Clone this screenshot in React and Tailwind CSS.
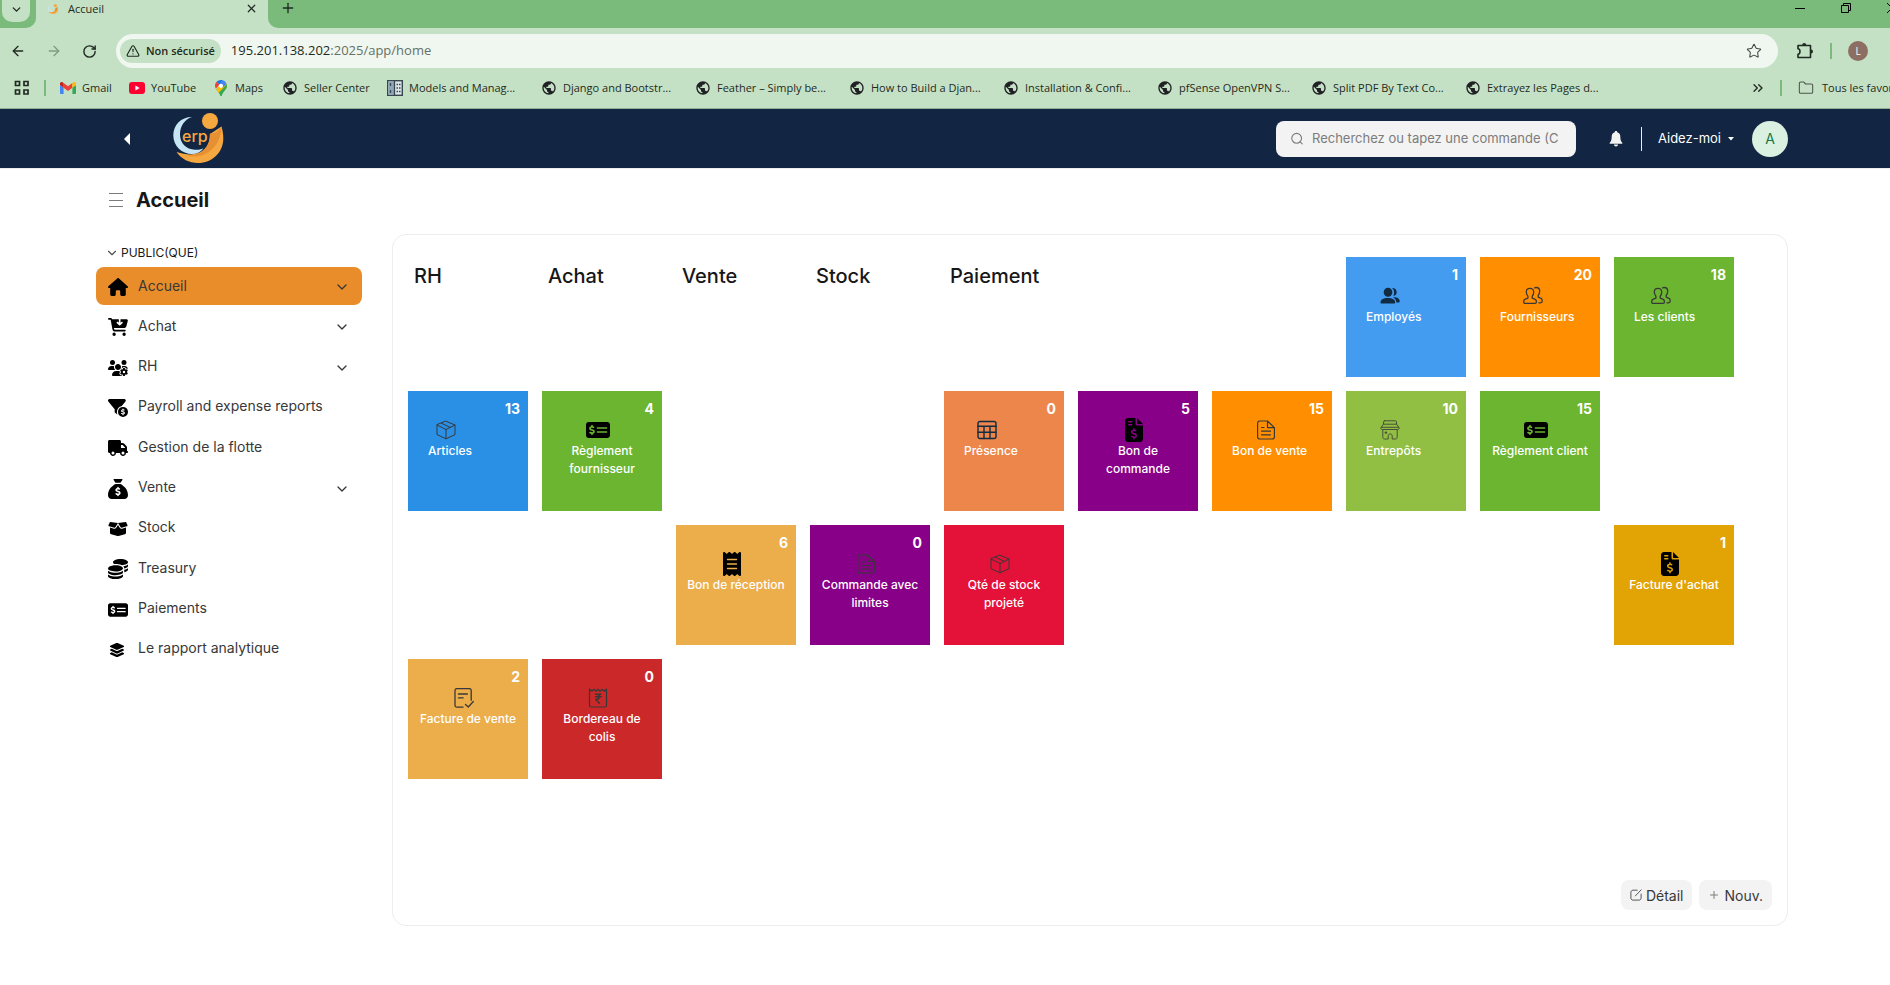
import {
  FaHouse, FaCartArrowDown, FaUsersGear, FaFilterCircleDollar, FaTruck, FaSackDollar,
  FaBoxOpen, FaCoins, FaMoneyCheckDollar, FaLayerGroup, FaFileInvoiceDollar, FaReceipt,
} from "react-icons/fa6";
import { MdPublic } from "react-icons/md";
import { ChevronDown, ChevronsRight, ArrowLeft, ArrowRight, RotateCw, Star, Folder, X, Plus, TriangleAlert } from "lucide-react";

function Line({ children, className = "h-5 w-5 text-[#383838]", sw = 1 }) {
  return (
    <svg viewBox="0 0 20 20" className={className} fill="none" stroke="currentColor" strokeWidth={sw} strokeLinecap="round" strokeLinejoin="round" aria-hidden="true">
      {children}
    </svg>
  );
}

const BoxIcon = () => (
  <Line>
    <path d="M10 1.2 19 5v9.600L10 18.800 1 14.600V5zM1 5l9 4.500L19 5M10 9.500v9.300M5.400 3.200l9 4.300" />
  </Line>
);
const TableIcon = () => (
  <Line className="h-5 w-5 text-[#112b42]" sw={1.4}>
    <rect x="1" y="1.5" width="18" height="17" rx="2" />
    <path d="M1 6.2h18M1 12.2h18M7 6.2v12.3M13 6.2v12.3" />
  </Line>
);
const FileIcon = () => (
  <Line sw={1.2}>
    <path d="M11.500 1H3.800C2.500 1 1.600 1.900 1.600 3.200v13.600c0 1.300.9 2.200 2.200 2.200h12.400c1.300 0 2.200-.9 2.200-2.200V7.600zM11.500 1v6.600h6.900M5.500 7.500h2.500M5.500 11.200h9M5.500 14.800h9" />
  </Line>
);
const LimitFileIcon = () => (
  <Line sw={1.200}>
    <path d="M11.500 1H3.500C2.500 1 1.800 1.900 1.800 3v14c0 1.100.8 2 1.800 2h12.800c1 0 1.800-.9 1.800-2V7.500zM11.500 1v4.500c0 1.200.8 2 2 2h4.700M5.500 8H9M5.500 11.500h9M5.500 15h9" />
  </Line>
);
const StoreIcon = () => (
  <Line className="h-5 w-5 text-[#4a4f3a]">
    <path d="M4.500.8h11c.6 0 1 .4 1 1v2.400H3.500V1.800c0-.6.4-1 1-1zM3.500 4.200.8 7.800c-.2 1 .5 1.700 1.700 1.700h15c1.200 0 1.900-.7 1.700-1.700l-2.700-3.600M1.500 7.300h17M2.800 9.500v7.700c0 1 .7 1.800 1.700 1.800h3.700v-3.200c0-1.100.8-1.900 2-1.900s2 .8 2 1.900V19h3.300c1 0 1.700-.8 1.700-1.800V9.500" />
    <rect x="5.500" y="12" width="1.200" height="1.200" fill="currentColor" />
  </Line>
);
const UsersIcon = () => (
  <Line sw={1.300}>
    <path d="M7 2.300c2.400 0 3.700 1.600 3.700 3.800 0 1.700-.6 3.200-1.500 4.200v1.900l2.600 1c1.100.4 1.600 1.200 1.600 2.300v.5c0 .8-.5 1.300-1.300 1.300H2c-.8 0-1.300-.5-1.300-1.300v-.5c0-1.100.5-1.900 1.600-2.300l2.600-1v-1.900C4 9.300 3.300 7.800 3.300 6.100c0-2.200 1.300-3.800 3.700-3.800z" />
    <path d="M11.500 1.900c.4-.3 1-.4 1.600-.4 2.300 0 3.600 1.600 3.600 3.700 0 1.600-.6 3-1.500 4v1.900l2.400 1c1.100.4 1.600 1.300 1.600 2.300v.7c0 1-.7 1.700-1.700 1.700h-1.600" />
  </Line>
);
const StaffIcon = () => (
  <svg viewBox="0 0 20 20" className="h-5 w-5 fill-[#112b42]" aria-hidden="true">
    <ellipse cx="8" cy="6.300" rx="4.300" ry="4.500" />
    <path d="M.5 16.500c0-3 2.600-4.500 7.300-4.500s7.400 1.500 7.400 4.500c0 .7-.5 1.100-1.200 1.100H1.700c-.7 0-1.200-.4-1.200-1.100z" />
    <path d="M12 2c3 0 4.700 1.600 4.700 4.200 0 2-1.300 3.600-3.300 3.700.4-1 .7-2.200.7-3.500C14.100 4.700 13.300 3.100 12 2z" />
    <path d="M13 11.200c4.200-.2 6.700 1.300 6.700 4 0 .9-.5 1.300-1.300 1.300h-2c-.1-2.400-1.300-4.200-3.400-5.300z" />
  </svg>
);
const InvoiceCheckIcon = () => (
  <Line sw={1.300}>
    <path d="M9 19.200H3C1.800 19.200 1 18.400 1 17.200V2.600c0-1.200.8-2 2-2h12.200c1.200 0 2 .8 2 2v9.700M4.400 6h9M4.400 9.800h4.800M11.500 16.500l2.800 2.500 5-5.500" />
  </Line>
);
const RupeeIcon = () => (
  <Line sw={1.200}>
    <path d="M1.500 1v16.200c0 1.100.7 1.800 1.800 1.800h13.400c1.100 0 1.800-.7 1.800-1.800V1l-2.300 2.200L14 1.300l-2 1.900-2-1.900-2 1.900-2-1.900-2.200 1.900z" />
    <path strokeWidth="1.400" d="M7.500 6.200h5.500M7.500 8.800h5.500M7.500 6.200h1.300c3.200 0 3.200 5 0 5H7.700l3.800 4.300" />
  </Line>
);
const CheckSolid = () => <FaMoneyCheckDollar className="h-6 w-6 text-black" />;
const FileDollar = () => <FaFileInvoiceDollar className="h-6 w-6 text-black" />;
const ReceiptSolid = () => <FaReceipt className="h-6 w-6 text-black" />;

const SiteIcon = () => <MdPublic className="h-4 w-4 text-[#202124]" />;

const GmailIcon = () => (
  <svg viewBox="0 0 16 12" className="h-3 w-4" aria-hidden="true">
    <path fill="#4285f4" d="M1 12h2.600V5.700L0 3v8a1 1 0 0 0 1 1z" />
    <path fill="#34a853" d="M12.400 12H15a1 1 0 0 0 1-1V3l-3.600 2.700z" />
    <path fill="#ea4335" d="M3.600 5.700V1L8 4.300 12.400 1v4.700L8 9z" />
    <path fill="#c5221f" d="M0 1.600V3l3.600 2.700V1L2.600.3C1.500-.5 0 .3 0 1.600z" />
    <path fill="#fbbc04" d="M12.400 1v4.700L16 3V1.600C16 .3 14.500-.5 13.400.3z" />
  </svg>
);
const YoutubeIcon = () => (
  <svg viewBox="0 0 16 12" className="h-3 w-4" aria-hidden="true">
    <rect width="16" height="12" rx="3" fill="#ff0033" />
    <path fill="#fff" d="M6.400 3.500v5L10.600 6z" />
  </svg>
);
const MapsIcon = () => (
  <svg viewBox="0 0 12 16" className="mr-0.5 h-4 w-3" aria-hidden="true">
    <path fill="#34a853" d="M6 16c.5 0 .6-.4.800-1 .6-1.800 1.700-2.900 2.900-4.500C10.900 9 12 7.800 12 5.800L1.200 9.300C2.900 11.500 4.300 13 5.200 15c.2.600.3 1 .8 1z" />
    <path fill="#fbbc04" d="M1.200 9.300 8 1.900 11.600 4c.3.600.4 1.200.4 1.800 0 1.200-.5 2.200-1.200 3.200L4 13z" />
    <path fill="#34a853" d="M12 5.800c0 2-1.100 3.200-2.300 4.700C8.500 12.100 7.400 13.200 6.800 15c-.2.600-.3 1-.8 1s-.6-.4-.8-1c-.3-.8-.8-1.500-1.300-2.200L11.700 4.200c.2.500.3 1 .3 1.600z" />
    <path fill="#4285f4" d="M7.800.3c1.700.5 3 1.900 3.800 3.700L7.700 7.500 4.600 4z" />
    <path fill="#1a73e8" d="M1.400 2.100C2.500.8 4.200 0 6 0c.6 0 1.200.1 1.800.3L4.400 4.500z" />
    <path fill="#ea4335" d="M1.400 2.100 4.500 4.600.9 8.800C.3 7.800 0 6.800 0 5.800c0-1.400.5-2.700 1.400-3.700z" />
    <circle cx="6" cy="5.800" r="2.100" fill="#fff" />
  </svg>
);
const ModelsIcon = () => (
  <svg viewBox="0 0 16 16" className="h-4 w-4" aria-hidden="true">
    <rect x=".7" y=".7" width="14.600" height="14.600" fill="#dfe6ea" stroke="#37474f" strokeWidth="1.400" />
    <path fill="#8fa5b8" d="M1.400 1.400h6v13.200h-6z" />
    <path stroke="#37474f" strokeWidth="1.300" d="M7.500 1v14M3.500 3v3M3.500 10v3M9.500 4.500H11M12 4.500h1.500M9.500 8H11M12 8h1.500M9.500 11.500H11M12 11.500h1.500" />
  </svg>
);

const bookmarks = [
  { label: "Gmail", icon: GmailIcon, w: "w-[69px]" },
  { label: "YouTube", icon: YoutubeIcon, w: "w-[86px]" },
  { label: "Maps", icon: MapsIcon, w: "w-[67px]" },
  { label: "Seller Center", icon: SiteIcon, w: "w-[105px]" },
  { label: "Models and Manag...", icon: ModelsIcon, w: "w-[154px]" },
  { label: "Django and Bootstr...", icon: SiteIcon, w: "w-[154px]" },
  { label: "Feather – Simply be...", icon: SiteIcon, w: "w-[154px]" },
  { label: "How to Build a Djan...", icon: SiteIcon, w: "w-[154px]" },
  { label: "Installation & Confi...", icon: SiteIcon, w: "w-[154px]" },
  { label: "pfSense OpenVPN S...", icon: SiteIcon, w: "w-[154px]" },
  { label: "Split PDF By Text Co...", icon: SiteIcon, w: "w-[154px]" },
  { label: "Extrayez les Pages d...", icon: SiteIcon, w: "w-[154px]" },
];

function Browser() {
  return (
    <div className="overflow-hidden border-b border-[#8fb092] bg-[#c5e1c5] font-['Open_Sans','Noto_Sans',sans-serif] text-[#1f2a20]">
      <div className="flex h-7 items-start">
        <div className="h-full w-9 rounded-br-[10px] bg-[#7abb7b] pl-0.5">
          <button aria-label="Rechercher dans les onglets" className="flex h-[22px] w-7 items-center justify-center rounded-b-[10px] bg-[#c5e1c5] pb-1">
            <ChevronDown size={13} strokeWidth={2.5} />
          </button>
        </div>
        <div className="flex h-7 w-[232px] items-start pt-0.5 pl-3">
          <svg viewBox="0 0 50 50" className="mt-0.5 h-2.5 w-2.5" aria-hidden="true">
            <LogoShapes />
          </svg>
          <span className="ml-2.5 text-[11px] leading-[14px]">Accueil</span>
          <button aria-label="Fermer l'onglet" className="mr-2.5 ml-auto"><X size={13} strokeWidth={2.2} /></button>
        </div>
        <div className="flex h-full flex-1 items-start rounded-bl-[10px] bg-[#7abb7b]">
          <button aria-label="Nouvel onglet" className="ml-3"><Plus size={16} strokeWidth={2} /></button>
          <div className="ml-auto flex h-4 shrink-0 items-center">
            <button aria-label="Réduire" className="mr-[34px]"><svg viewBox="0 0 12 12" className="h-3 w-3" stroke="#000"><path d="M1 6.5h10" /></svg></button>
            <button aria-label="Restaurer" className="mr-[34px]"><svg viewBox="0 0 12 12" className="h-3 w-3" fill="none" stroke="#000"><path d="M1.5 3.5h7v7h-7zM3.5 3.500v-2h7v7h-2" /></svg></button>
            <button aria-label="Fermer" className="-mr-2"><svg viewBox="0 0 12 12" className="h-3 w-3" stroke="#000"><path d="m1 1 10 10M11 1 1 11" /></svg></button>
          </div>
        </div>
      </div>
      <div className="flex h-[46px] items-center">
        <button aria-label="Précédent" className="ml-2.5"><ArrowLeft size={16} strokeWidth={2} /></button>
        <button aria-label="Suivant" className="ml-5 text-[#829a83]"><ArrowRight size={16} strokeWidth={2} /></button>
        <button aria-label="Actualiser" className="ml-5"><RotateCw size={15} strokeWidth={2.3} /></button>
        <div className="ml-[19px] flex h-[34px] min-w-0 flex-1 items-center rounded-full bg-[#f0f7f0] pr-4 pl-1">
          <button className="flex h-6 items-center gap-1.5 rounded-full bg-[#c5e1c5] px-1.5 text-[11px] font-semibold">
            <TriangleAlert size={14} strokeWidth={2} />
            Non sécurisé
          </button>
          <div role="textbox" aria-label="Adresse" className="ml-2.5 flex-1 text-[13px]">195.201.138.202<span className="text-[#657066]">:2025/app/home</span></div>
          <button aria-label="Ajouter aux favoris"><Star size={16} strokeWidth={1.6} className="text-[#444b44]" /></button>
        </div>
        <button aria-label="Extensions" className="ml-[18px]">
          <svg viewBox="0 0 18 18" className="h-[18px] w-[18px]" fill="none" stroke="currentColor" strokeWidth="1.6" strokeLinejoin="round">
            <path d="M2 3.500h12.500v12H2v-3.200c2.600-.2 2.600-5.400 0-5.600z" />
            <path fill="currentColor" stroke="none" d="M6.200 3a2 2 0 0 1 4 0zM15 7.500a2 2 0 0 1 0 4z" />
          </svg>
        </button>
        <span className="ml-4 h-4 w-0.5 bg-[#7abb7b]" />
        <button className="mr-[22px] ml-4 h-5 w-5 rounded-full bg-[#8d6e63] text-[10px] leading-5 text-white">L</button>
      </div>
      <div className="flex h-[34px] items-start pt-1 text-[11px] whitespace-nowrap">
        <button aria-label="Applications" className="mt-0.5 ml-3.5">
          <svg viewBox="0 0 16 16" className="h-4 w-4" fill="none" stroke="currentColor" strokeWidth="1.700"><path d="M1.500 1.500h4v4h-4zM10 1.500h4v4h-4zM1.500 10h4v4h-4zM10 10h4v4h-4z" /></svg>
        </button>
        <span className="mt-0.5 ml-3.5 h-4 w-0.5 bg-[#7abb7b]" />
        <nav aria-label="Favoris" className="ml-3.5 flex">
          {bookmarks.map(({ label, icon: Icon, w }) => (
            <a key={label} href="#" className={`flex h-5 shrink-0 items-center gap-1.5 ${w}`}>
              <Icon />
              {label}
            </a>
          ))}
        </nav>
        <button aria-label="Autres favoris" className="mr-3.5 ml-auto pt-0.5"><ChevronsRight size={16} strokeWidth={2} /></button>
        <span className="mt-0.5 h-4 w-0.5 shrink-0 bg-[#7abb7b]" />
        <a href="#" className="ml-4 flex h-5 w-[92px] shrink-0 items-center gap-2">
          <Folder size={16} strokeWidth={1.6} className="shrink-0 text-[#4b564c]" />
          Tous les favoris
        </a>
      </div>
    </div>
  );
}

function LogoShapes() {
  return (
    <>
      <path fill="#c6e6f5" d="M19 4C8 4 .3 12 .3 22.500.3 33 9 41 19 41c5 0 9-2 11.500-5.800-3 1.300-5.500 1.800-8.500 1.600C13 36.300 7 30 7 21.500 7 13 11.500 6.500 19 4z" />
      <path fill="#f6a840" d="M3.500 39C8.500 46 16 50 25 50c14 0 25.300-10.500 25.300-24.500 0-4-.6-8-1.800-12L37 21c0 16-12 25-33.500 18z" />
      <path fill="#e78f33" d="M48.500 13.500C46 18 42.500 20.500 36.800 20.800 37.500 35 28 43.500 12 42.300c18 5.200 36-6.300 36.500-28.800z" />
      <circle cx="37" cy="8" r="8" fill="#f6a840" />
    </>
  );
}

function Header() {
  return (
    <header className="border-b border-[#ededed] bg-[#122644] font-['Inter',sans-serif] text-white">
      <div className="mr-[102px] ml-[121px] flex h-[59px] items-center">
        <button aria-label="Replier">
          <svg viewBox="0 0 10 16" className="h-4 w-2.5"><path d="M9 2v12L3 8z" fill="#fff" /></svg>
        </button>
        <a href="#" aria-label="Accueil ERP" className="ml-[42px]">
          <svg viewBox="0 0 51 51" className="h-[51px] w-[51px]">
            <LogoShapes />
            <text x="9" y="29" fontFamily="Inter" fontSize="16" fontWeight="500" fill="#f6a840">erp</text>
          </svg>
        </a>
        <div className="ml-auto flex h-9 w-[300px] items-center rounded-lg bg-[#f3f3f3] pr-2 pl-3.5">
          <Line className="h-3.5 w-3.5 shrink-0 text-[#7c7c7c]" sw={1.6}><circle cx="9.5" cy="9" r="7" /><path d="m14.500 14 3 3" /></Line>
          <input id="search" aria-label="Rechercher" placeholder="Recherchez ou tapez une commande (C" className="ml-2 min-w-0 flex-1 bg-transparent text-[13px] outline-none placeholder:text-[#7c7c7c]" />
        </div>
        <button aria-label="Notifications" className="ml-8">
          <svg viewBox="0 0 16 18" className="h-[18px] w-4 fill-[#f3f3f3]"><path d="M8 1c.8 0 1.300.5 1.300 1.200 2 .6 3 2.200 3 4.300 0 3.500.7 4.800 2 6.300v.9H1.700v-.9c1.300-1.500 2-2.800 2-6.300 0-2.100 1-3.700 3-4.300C6.700 1.500 7.200 1 8 1zM6 14.600h4c0 1.200-.8 2-2 2s-2-.8-2-2z" /></svg>
        </button>
        <span className="ml-[17px] h-6 w-px bg-[#ededed]" />
        <button className="ml-4 flex items-center gap-1.5 text-[13px]">
          Aidez-moi
          <svg viewBox="0 0 8 4" className="h-1 w-2"><path d="M1 0h6L4 3.500z" fill="#fff" /></svg>
        </button>
        <button className="ml-[17px] h-9 w-9 rounded-full bg-[#daf0e1] text-[14px] text-[#137949]">A</button>
      </div>
    </header>
  );
}

const navItems = [
  { label: "Accueil", icon: FaHouse, more: true, active: true },
  { label: "Achat", icon: FaCartArrowDown, more: true },
  { label: "RH", icon: FaUsersGear, more: true },
  { label: "Payroll and expense reports", icon: FaFilterCircleDollar },
  { label: "Gestion de la flotte", icon: FaTruck },
  { label: "Vente", icon: FaSackDollar, more: true },
  { label: "Stock", icon: FaBoxOpen },
  { label: "Treasury", icon: FaCoins },
  { label: "Paiements", icon: FaMoneyCheckDollar },
  { label: "Le rapport analytique", icon: FaLayerGroup, small: true },
];

function Sidebar() {
  return (
    <aside className="w-[266px] shrink-0">
      <button className="flex h-[33px] items-center gap-0.5 pt-1 pl-[9px] text-[12px] text-[#171717]">
        <ChevronDown size={14} strokeWidth={2} className="text-[#525252]" />
        PUBLIC(QUE)
      </button>
      <nav aria-label="Modules" className="flex h-[401px] flex-col justify-between">
        {navItems.map(({ label, icon: Icon, more, active, small }) => (
          <a key={label} href="#" className={`flex h-[38px] items-center rounded-lg pr-3 pl-3 text-[14px] text-[#383838] ${active ? "bg-[#e88d2a]" : ""}`}>
            <span className="flex h-5 w-5 items-center pt-0.5 text-black">
              <Icon className={small ? "mx-px h-4 w-4" : "h-5 w-5"} />
            </span>
            <span className="ml-2.5 pb-0.5">{label}</span>
            {more && <ChevronDown size={16} strokeWidth={2} className="mt-0.5 ml-auto" />}
          </a>
        ))}
      </nav>
    </aside>
  );
}

const tiles = [
  { label: "Employés", count: 1, icon: StaffIcon, bg: "bg-[#449cf0]", place: "col-start-8 row-start-1", start: true },
  { label: "Fournisseurs", count: 20, icon: UsersIcon, bg: "bg-[#ff8f00]", place: "col-start-9 row-start-1", start: true },
  { label: "Les clients", count: 18, icon: UsersIcon, bg: "bg-[#6bb530]", place: "col-start-10 row-start-1", start: true },
  { label: "Articles", count: 13, icon: BoxIcon, bg: "bg-[#2990e6]", place: "col-start-1 row-start-2", start: true },
  { label: "Règlement fournisseur", count: 4, icon: CheckSolid, bg: "bg-[#6bb530]", place: "col-start-2 row-start-2" },
  { label: "Présence", count: 0, icon: TableIcon, bg: "bg-[#ed864b]", place: "col-start-5 row-start-2", start: true },
  { label: "Bon de commande", count: 5, icon: FileDollar, bg: "bg-[#870087]", place: "col-start-6 row-start-2" },
  { label: "Bon de vente", count: 15, icon: FileIcon, bg: "bg-[#ff8f00]", place: "col-start-7 row-start-2", start: true },
  { label: "Entrepôts", count: 10, icon: StoreIcon, bg: "bg-[#91bf43]", place: "col-start-8 row-start-2", start: true },
  { label: "Règlement client", count: 15, icon: CheckSolid, bg: "bg-[#6bb530]", place: "col-start-9 row-start-2" },
  { label: "Bon de réception", count: 6, icon: ReceiptSolid, bg: "bg-[#ecad4b]", place: "col-start-3 row-start-3" },
  { label: "Commande avec limites", count: 0, icon: LimitFileIcon, bg: "bg-[#870087]", place: "col-start-4 row-start-3" },
  { label: "Qté de stock projeté", icon: BoxIcon, bg: "bg-[#e41138]", place: "col-start-5 row-start-3" },
  { label: "Facture d'achat", count: 1, icon: FileDollar, bg: "bg-[#e2a405]", place: "col-start-10 row-start-3" },
  { label: "Facture de vente", count: 2, icon: InvoiceCheckIcon, bg: "bg-[#ecad4b]", place: "col-start-1 row-start-4" },
  { label: "Bordereau de colis", count: 0, icon: RupeeIcon, bg: "bg-[#cb2929]", place: "col-start-2 row-start-4" },
];

const titles = ["RH", "Achat", "Vente", "Stock", "Paiement"];

function Tile({ label, count, icon: Icon, bg, place, start }) {
  return (
    <a href="#" className={`flex flex-col text-white ${bg} ${place}`}>
      <span className="h-[27px] pt-2 pr-2 text-right text-[14px] leading-5 font-bold">{count}</span>
      <span className={`flex flex-col items-center text-center text-[12px] leading-[18px] font-medium ${start ? "ml-5 self-start" : "px-2"}`}>
        <span className="mr-2 flex h-6 items-center"><Icon /></span>
        {label}
      </span>
    </a>
  );
}

export default function App() {
  return (
    <div className="min-h-screen overflow-x-hidden bg-white">
      <Browser />
      <Header />
      <div className="pr-[102px] pl-24 font-['Inter',sans-serif] text-[#171717]">
        <div className="flex h-[65px] items-center gap-3 pb-1 pl-3">
          <button aria-label="Menu latéral">
            <svg viewBox="0 0 16 16" className="h-4 w-4" stroke="#7c7c7c"><path d="M1 1.500h14M1 8.500h14M1 14.500h14" /></svg>
          </button>
          <h1 className="text-[20px] leading-7 font-bold">Accueil</h1>
        </div>
        <div className="flex gap-[30px]">
          <Sidebar />
          <main className="flex min-h-[692px] flex-1 flex-col rounded-[14px] border border-[#ededed] px-[15px] pt-[22px] pb-[15px]">
            <div className="grid grid-cols-[repeat(10,120px)] grid-rows-[repeat(4,120px)] gap-3.5">
              {titles.map((t) => (
                <h2 key={t} className="row-start-1 pt-1 pl-1.5 text-[20px] leading-[30px] font-medium">{t}</h2>
              ))}
              {tiles.map((t) => <Tile key={t.label} {...t} />)}
            </div>
            <div className="mt-auto flex justify-end gap-[7px]">
              <button className="flex h-[30px] items-center gap-1 rounded-lg bg-[#f3f3f3] px-[9px] text-[14px] text-[#383838]">
                <Line className="h-3 w-3" sw={1.4}><path d="M12 2H5C3 2 1.500 3.500 1.500 5.500V15c0 2 1.500 3.500 3.500 3.500h10c2 0 3.500-1.500 3.500-3.500V8.500M9 11.500 18.500 1.500" /></Line>
                Détail
              </button>
              <button className="flex h-[30px] items-center gap-1 rounded-lg bg-[#f3f3f3] px-[9px] text-[14px] text-[#383838]">
                <Plus size={12} strokeWidth={2} className="text-[#7c7c7c]" />
                Nouv.
              </button>
            </div>
          </main>
        </div>
      </div>
    </div>
  );
}
